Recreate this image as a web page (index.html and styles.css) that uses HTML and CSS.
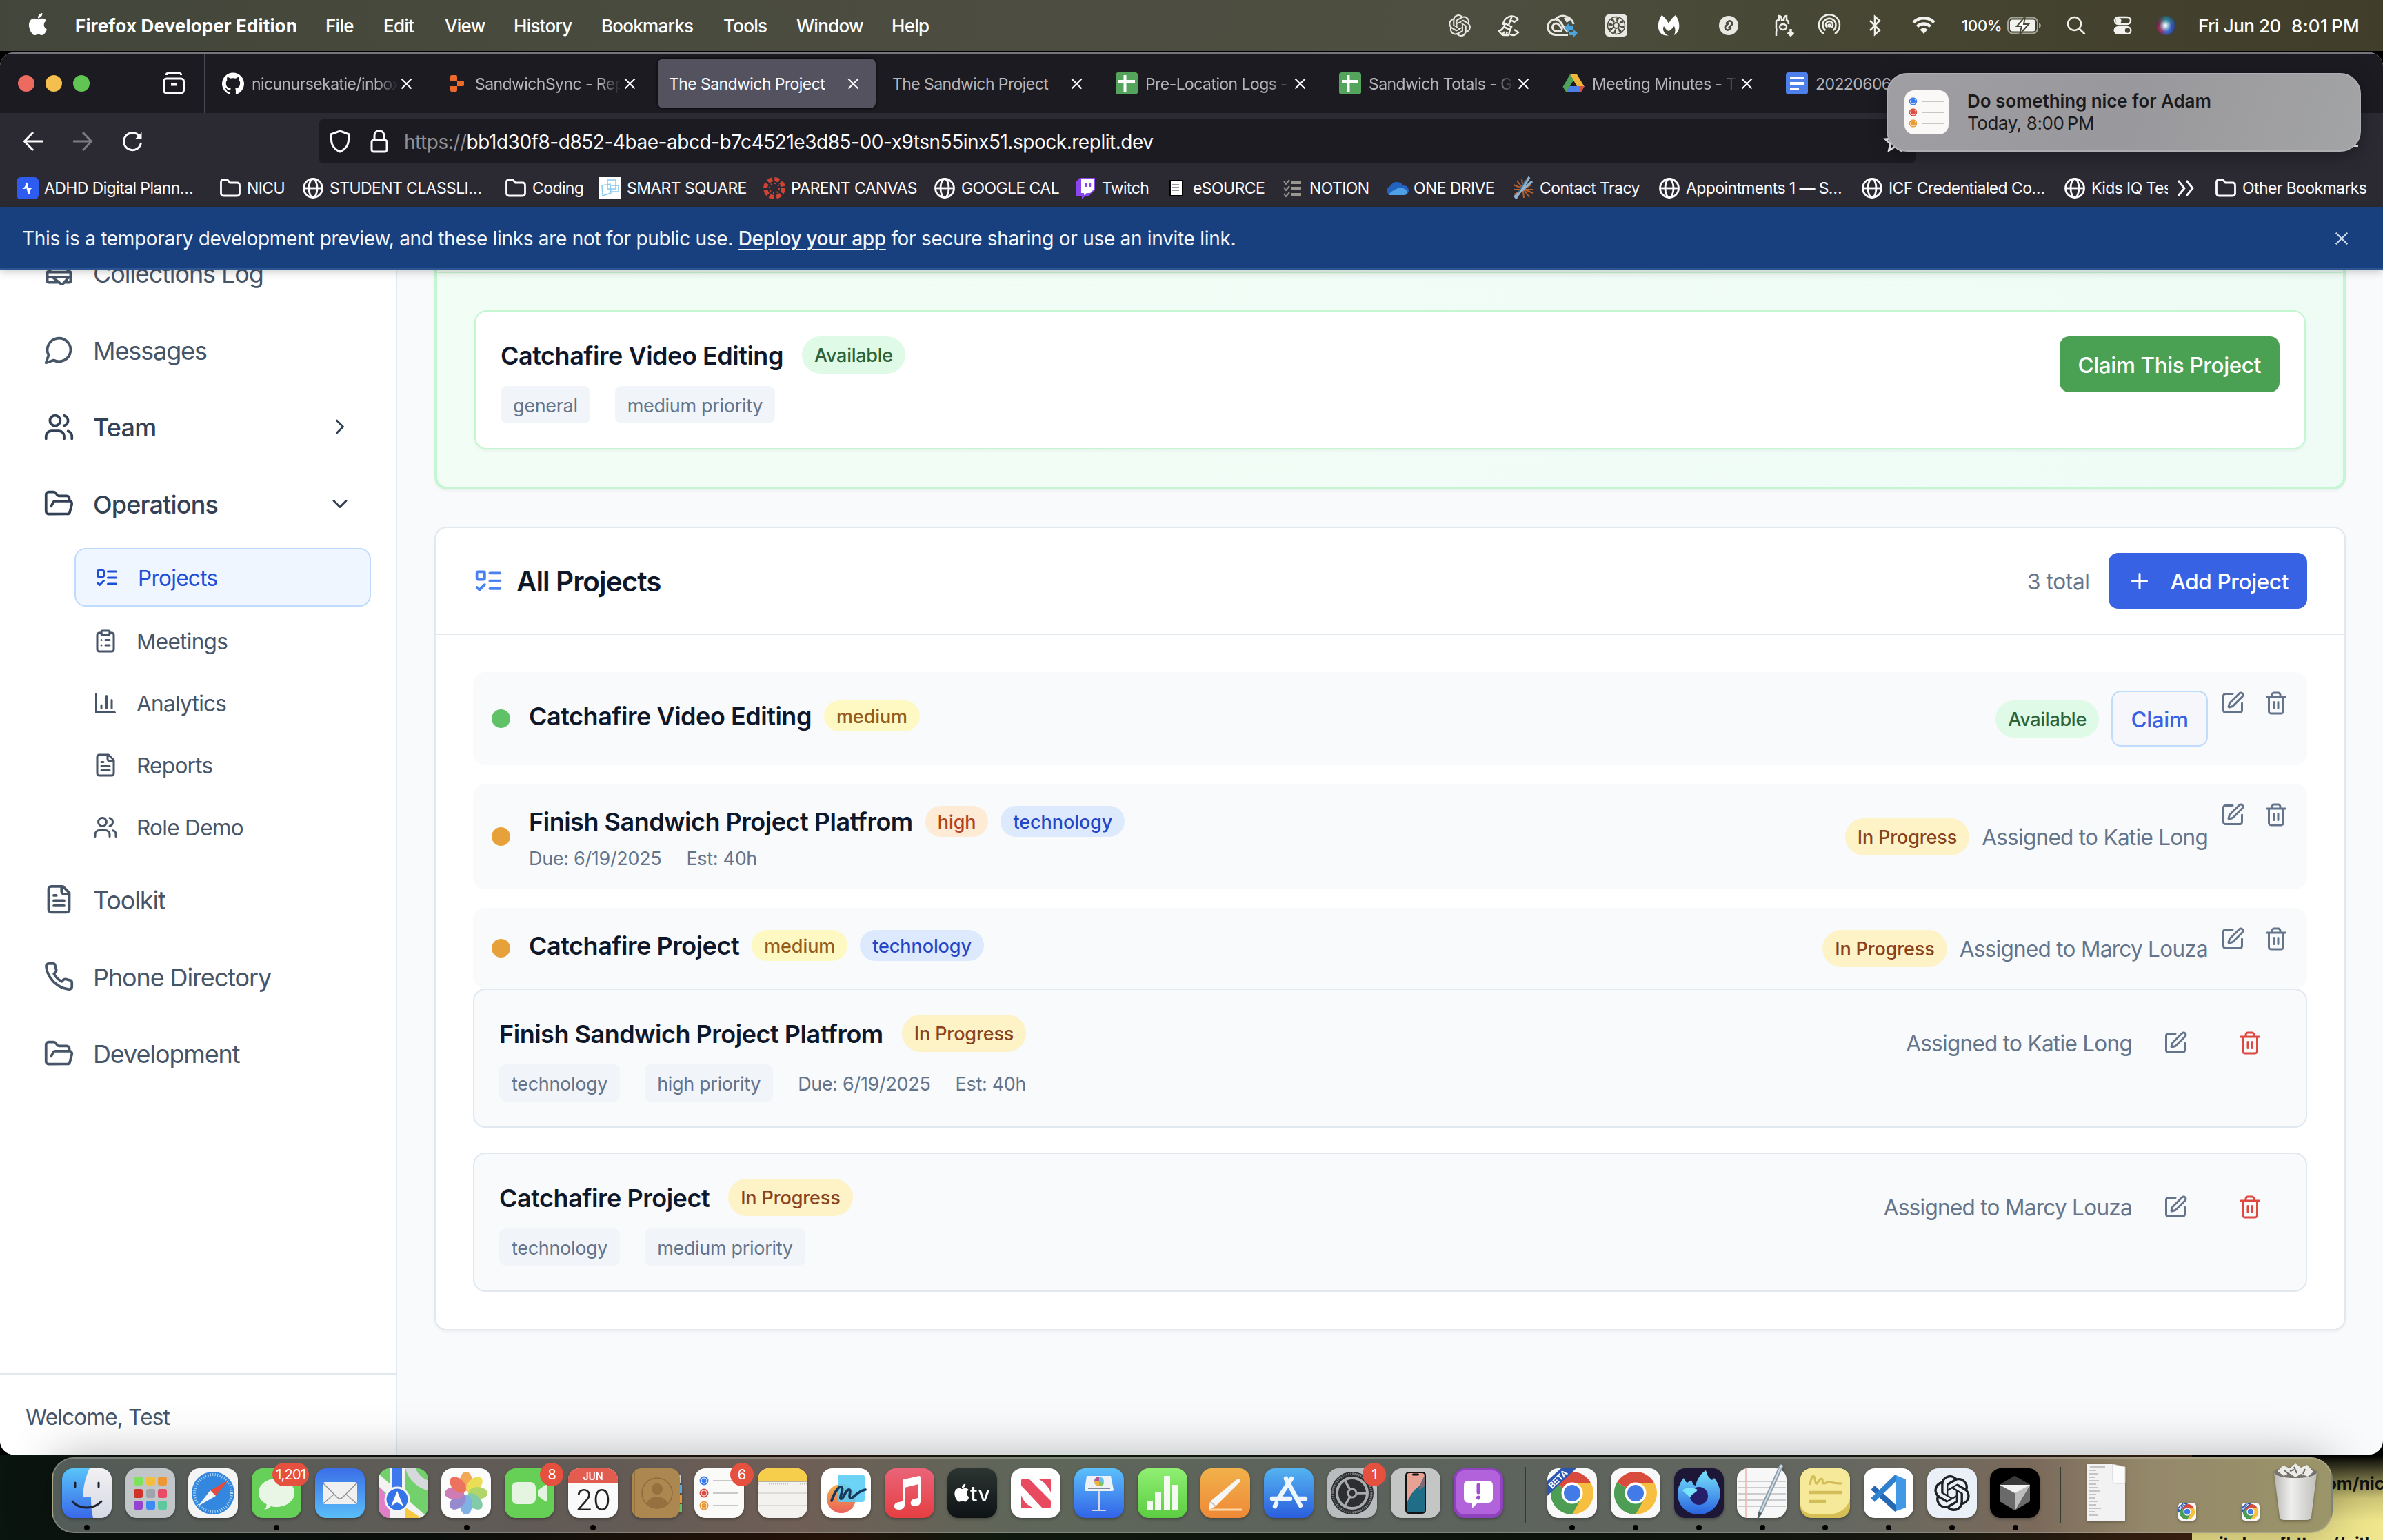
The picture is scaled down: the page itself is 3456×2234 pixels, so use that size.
FILE: index.html
```html
<!DOCTYPE html>
<html lang="en">
<head>
<meta charset="utf-8">
<title>The Sandwich Project</title>
<link rel="stylesheet" href="styles.css">
</head>
<body>
<svg class="sprite" aria-hidden="true">
  <symbol id="sandwich" viewBox="0 0 24 24"><path d="M3 11v3a1 1 0 0 0 1 1h16a1 1 0 0 0 1-1v-3M12 19H4a1 1 0 0 1-1-1v-2a1 1 0 0 1 1-1h16a1 1 0 0 1 1 1v2a1 1 0 0 1-1 1h-3.83M3 11l7.77-6.04a2 2 0 0 1 2.46 0L21 11H3ZM12.97 19.77 7 15h12.5l-3.75 4.5a2 2 0 0 1-2.78.27Z"/></symbol>
  <symbol id="message" viewBox="0 0 24 24"><path d="M7.9 20A9 9 0 1 0 4 16.1L2 22Z"/></symbol>
  <symbol id="users" viewBox="0 0 24 24"><path d="M16 21v-2a4 4 0 0 0-4-4H6a4 4 0 0 0-4 4v2M22 21v-2a4 4 0 0 0-3-3.87M16 3.13a4 4 0 0 1 0 7.75"/><circle cx="9" cy="7" r="4"/></symbol>
  <symbol id="folder-open" viewBox="0 0 24 24"><path d="m6 14 1.5-2.9A2 2 0 0 1 9.24 10H20a2 2 0 0 1 1.94 2.5l-1.54 6a2 2 0 0 1-1.95 1.5H4a2 2 0 0 1-2-2V5a2 2 0 0 1 2-2h3.9a2 2 0 0 1 1.69.9l.81 1.2a2 2 0 0 0 1.67.9H18a2 2 0 0 1 2 2v2"/></symbol>
  <symbol id="list-todo" viewBox="0 0 24 24"><rect x="3" y="5" width="6" height="6" rx="1"/><path d="m3 17 2 2 4-4M13 6h8M13 12h8M13 18h8"/></symbol>
  <symbol id="clipboard" viewBox="0 0 24 24"><rect x="8" y="2" width="8" height="4" rx="1"/><path d="M16 4h2a2 2 0 0 1 2 2v14a2 2 0 0 1-2 2H6a2 2 0 0 1-2-2V6a2 2 0 0 1 2-2h2M12 11h4M12 16h4M8 11h.01M8 16h.01"/></symbol>
  <symbol id="chart" viewBox="0 0 24 24"><path d="M3 3v18h18M18 17V9M13 17V5M8 17v-3"/></symbol>
  <symbol id="file-text" viewBox="0 0 24 24"><path d="M15 2H6a2 2 0 0 0-2 2v16a2 2 0 0 0 2 2h12a2 2 0 0 0 2-2V7ZM14 2v4a2 2 0 0 0 2 2h4M10 9H8M16 13H8M16 17H8"/></symbol>
  <symbol id="phone" viewBox="0 0 24 24"><path d="M22 16.92v3a2 2 0 0 1-2.18 2 19.79 19.79 0 0 1-8.63-3.07 19.5 19.5 0 0 1-6-6 19.79 19.79 0 0 1-3.07-8.67A2 2 0 0 1 4.11 2h3a2 2 0 0 1 2 1.72 12.84 12.84 0 0 0 .7 2.81 2 2 0 0 1-.45 2.11L8.09 9.91a16 16 0 0 0 6 6l1.27-1.27a2 2 0 0 1 2.11-.45 12.84 12.84 0 0 0 2.81.7A2 2 0 0 1 22 16.92z"/></symbol>
  <symbol id="chev-right" viewBox="0 0 24 24"><path d="m9 18 6-6-6-6"/></symbol>
  <symbol id="chev-down" viewBox="0 0 24 24"><path d="m6 9 6 6 6-6"/></symbol>
  <symbol id="plus" viewBox="0 0 24 24"><path d="M5 12h14M12 5v14"/></symbol>
  <symbol id="pen" viewBox="0 0 24 24"><path d="M12 3H5a2 2 0 0 0-2 2v14a2 2 0 0 0 2 2h14a2 2 0 0 0 2-2v-7"/><path d="M18.375 2.625a1 1 0 0 1 3 3l-9.013 9.014a2 2 0 0 1-.853.505l-2.873.84a.5.5 0 0 1-.62-.62l.84-2.873a2 2 0 0 1 .506-.852z"/></symbol>
  <symbol id="trash" viewBox="0 0 24 24"><path d="M3 6h18M19 6v14c0 1-1 2-2 2H7c-1 0-2-1-2-2V6M8 6V4c0-1 1-2 2-2h4c1 0 2 1 2 2v2M10 11v6M14 11v6"/></symbol>
  <symbol id="x" viewBox="0 0 18 18"><path d="M1.500 1.500 16.500 16.500M16.500 1.500 1.500 16.500"/></symbol>
  <symbol id="globe" viewBox="0 0 32 32"><circle cx="16" cy="16" r="13.500"/><ellipse cx="16" cy="16" rx="6" ry="13.500"/><path d="M3 16h26"/></symbol>
  <symbol id="folder" viewBox="0 0 32 32"><path d="M2.500 7a3.500 3.500 0 0 1 3.500-3.500h5.500l4 4.500H26A3.500 3.500 0 0 1 29.500 11.500v12A3.500 3.500 0 0 1 26 27H6a3.500 3.500 0 0 1-3.500-3.500z"/></symbol>
  <symbol id="sheets" viewBox="0 0 32 32"><rect width="32" height="32" rx="4" fill="#55a45c"/><path d="M4 13h24M13.500 4v24" stroke="#fff" stroke-width="4"/></symbol>
  <symbol id="openai" viewBox="0 0 24 24"><path d="M22.2819 9.8211a5.9847 5.9847 0 0 0-.5157-4.9108 6.0462 6.0462 0 0 0-6.5098-2.9A6.0651 6.0651 0 0 0 4.9807 4.1818a5.9847 5.9847 0 0 0-3.9977 2.9 6.0462 6.0462 0 0 0 .7427 7.0966 5.98 5.98 0 0 0 .511 4.9107 6.051 6.051 0 0 0 6.5146 2.9001A5.9847 5.9847 0 0 0 13.2599 24a6.0557 6.0557 0 0 0 5.7718-4.2058 5.9894 5.9894 0 0 0 3.9977-2.9001 6.0557 6.0557 0 0 0-.7475-7.0729zm-9.022 12.6081a4.4755 4.4755 0 0 1-2.8764-1.0408l.1419-.0804 4.7783-2.7582a.7948.7948 0 0 0 .3927-.6813v-6.7369l2.02 1.1686a.071.071 0 0 1 .038.052v5.5826a4.504 4.504 0 0 1-4.4945 4.4944zm-9.6607-4.1254a4.4708 4.4708 0 0 1-.5346-3.0137l.142.0852 4.783 2.7582a.7712.7712 0 0 0 .7806 0l5.8428-3.3685v2.3324a.0804.0804 0 0 1-.0332.0615L9.74 19.9502a4.4992 4.4992 0 0 1-6.1408-1.6464zM2.3408 7.8956a4.485 4.485 0 0 1 2.3655-1.9728V11.6a.7664.7664 0 0 0 .3879.6765l5.8144 3.3543-2.0201 1.1685a.0757.0757 0 0 1-.071 0l-4.8303-2.7865A4.504 4.504 0 0 1 2.3408 7.872zm16.5963 3.8558L13.1038 8.364 15.1192 7.2a.0757.0757 0 0 1 .071 0l4.8303 2.7913a4.4944 4.4944 0 0 1-.6765 8.1042v-5.6772a.79.79 0 0 0-.407-.667zm2.0107-3.0231l-.142-.0852-4.7735-2.7818a.7759.7759 0 0 0-.7854 0L9.409 9.2297V6.8974a.0662.0662 0 0 1 .0284-.0615l4.8303-2.7866a4.4992 4.4992 0 0 1 6.6802 4.66zM8.3065 12.863l-2.02-1.1638a.0804.0804 0 0 1-.038-.0567V6.0742a4.4992 4.4992 0 0 1 7.3757-3.4537l-.142.0805L8.704 5.459a.7948.7948 0 0 0-.3927.6813zm1.0976-2.3654l2.602-1.4998 2.6069 1.4998v2.9994l-2.5974 1.4997-2.6067-1.4997Z"/></symbol>
  <symbol id="apple" viewBox="0 0 24 24"><path d="M12.152 6.896c-.948 0-2.415-1.078-3.96-1.04-2.04.027-3.91 1.183-4.961 3.014-2.117 3.675-.546 9.103 1.519 12.09 1.013 1.454 2.208 3.09 3.792 3.039 1.52-.065 2.09-.987 3.935-.987 1.831 0 2.35.987 3.96.948 1.637-.026 2.676-1.48 3.676-2.948 1.156-1.688 1.636-3.325 1.662-3.415-.039-.013-3.182-1.221-3.22-4.857-.026-3.04 2.48-4.494 2.597-4.559-1.429-2.09-3.623-2.324-4.39-2.376-2-.156-3.675 1.09-4.61 1.09zM15.53 3.83c.843-1.012 1.4-2.427 1.245-3.83-1.207.052-2.662.805-3.532 1.818-.78.896-1.454 2.338-1.273 3.714 1.338.104 2.715-.688 3.559-1.701"/></symbol>
  <symbol id="chrome" viewBox="0 0 72 72"><path d="M36 36 9.150 20.500a31 31 0 0 1 53.700 0z" fill="#d94b3d"/><path d="M36 36 62.850 20.500A31 31 0 0 1 36 67z" fill="#f6bf3f"/><path d="M36 36v31A31 31 0 0 1 9.150 20.500z" fill="#4d9e54"/><path d="M36 21h26.900L49.500 44 36 67l13.400-23z" fill="#f6bf3f"/><path d="M9.150 20.500 22.500 44 36 51 49 44 36 67A31 31 0 0 1 9.150 20.500z" fill="#4d9e54"/><circle cx="36" cy="36" r="15.500" fill="#fff"/><circle cx="36" cy="36" r="12" fill="#427be8"/></symbol>
  <symbol id="chrome-beta" viewBox="0 0 72 72"><clipPath id="cb"><rect width="72" height="72" rx="16"/></clipPath><use href="#chrome"/><g clip-path="url(#cb)"><path d="M0 40V18L20 0h22z" fill="#2d56b0"/><text x="16" y="20" text-anchor="middle" transform="rotate(-44 16 16)" font-family="Inter" font-size="12.500" font-weight="700" fill="#fff">BETA</text></g></symbol>
</svg>

<header class="menubar">
  <svg class="apple"><use href="#apple"/></svg>
  <b>Firefox Developer Edition</b><span>File</span><span>Edit</span><span>View</span><span>History</span><span>Bookmarks</span><span>Tools</span><span>Window</span><span>Help</span>
  <svg class="tray" viewBox="0 0 24 24" fill="#e9e9e4"><use href="#openai"/></svg>
  <svg class="tray line" viewBox="0 0 32 32"><path d="M29 7A12.500 12.500 0 0 0 7 15M20 2l-5 13M29 7l-6 4a7 7 0 0 0-4-2M10 13l9 5-2 4-9-4zM8 18c-2 3-4 5-7 6 2 3 5 6 7 6h7l2-8M6 29l3-4M11 30l2-5M17 29c4 2 9 1 12-3l-6-4"/></svg>
  <svg class="tray wide" viewBox="0 0 46 32"><g fill="none" stroke="#e9e9e4" stroke-width="3"><path d="M30 29.500H12A11 11 0 0 1 12 7c9 0 11 15 18 18"/><path d="M12 7c4-5 10-6 15-4a14 14 0 0 1 11 11"/><path d="M22 24H13a5 5 0 0 1 0-11c4 0 6 5 9 9"/></g><path d="M24 5l6-1 4 4-6 4z" fill="#e9e9e4"/><path d="M24 19l7-6v4h6v5h-6v4zM44 27l-7-6v4h-6v5h6v4z" fill="#4ba4dc"/></svg>
  <svg class="tray" viewBox="0 0 32 32"><rect width="32" height="32" rx="5" fill="#e9e9e4"/><circle cx="16" cy="16" r="12.500" fill="none" stroke="#4b4c3d" stroke-width="1.500"/><circle cx="16" cy="16" r="8.500" fill="none" stroke="#4b4c3d" stroke-width="6" stroke-dasharray="3 3.670"/><circle cx="16" cy="16" r="4" fill="none" stroke="#4b4c3d" stroke-width="2"/></svg>
  <svg class="tray" viewBox="0 0 32 32"><path d="M6 1c3 2 7 6 10 12C19 7 23 3 26 1c6 8 9 23-2 29 2-5 2-9 0-13-2 2-5 6-8 7-3-1-5-4-7-7-3 5 1 12 7 13.500C-2 32-2 12 6 1z" fill="#fff"/></svg>
  <svg class="tray" viewBox="0 0 32 32"><circle cx="16" cy="16" r="14" fill="#e9e9e4"/><path d="M20 18.500 17 21.500c-4 3-8-2-5-5l4-4M12 13.500l3-3c4-3 8 2 5 5l-4 4" fill="none" stroke="#4b4c3d" stroke-width="2.600"/></svg>
  <svg class="tray line" viewBox="0 0 32 32"><path d="M3 31v-6c2-3-1-5 0-8V10c1-2 2-2 4-2V2c3 0 4 3 4 6h3c0-3 1-6 4-6v6c3 1 3 4 3 6"/><ellipse cx="13" cy="18" rx="5" ry="4"/><path d="M24 21v8M20 26l4 4 4-4" stroke-width="3.500"/></svg>
  <svg class="tray line" viewBox="0 0 32 32"><path d="M8 28a15 15 0 1 1 16 0M10.500 23a9.500 9.500 0 1 1 11 0M13 19a5 5 0 1 1 6 0"/><circle cx="16" cy="16" r="1.500"/></svg>
  <svg class="tray line" viewBox="0 0 32 32"><path d="m5 9 14 14-7 6V3l7 6L5 23"/></svg>
  <svg class="tray wide" viewBox="0 0 36 32"><g fill="none" stroke="#f2f2ee" stroke-width="4.500"><path d="M3 11.500a21 21 0 0 1 30 0M8.500 17.500a13.500 13.500 0 0 1 19 0"/></g><path d="M12.500 22a8 8 0 0 1 11 0L18 28z" fill="#f2f2ee"/></svg>
  <span class="pct">100%</span>
  <svg class="tray wide" viewBox="0 0 50 32"><rect x="1" y="4.500" width="43" height="23" rx="7" fill="none" stroke="#a5a597" stroke-width="2"/><rect x="4" y="7.500" width="37" height="17" rx="4" fill="#f2f2ee"/><path d="M46 12v8q3-1.500 3-4t-3-4z" fill="#a5a597"/><path d="m26 3-12 14h7l-3 12 13-15h-7z" fill="#fff" stroke="#4a4a37" stroke-width="2"/></svg>
  <svg class="tray line" viewBox="0 0 32 32"><circle cx="13.500" cy="13.500" r="9.500"/><path d="m20.500 20.500 8 8"/></svg>
  <svg class="tray" viewBox="0 0 32 32"><rect x="3" y="4" width="23" height="10" rx="5" fill="none" stroke="#f2f2ee" stroke-width="2.500"/><circle cx="8.500" cy="9" r="4" fill="#f2f2ee"/><rect x="1.500" y="17" width="26" height="12" rx="6" fill="#f2f2ee"/><circle cx="21.500" cy="23" r="3.700" fill="#4a4a37"/></svg>
  <i class="siri"></i>
  <span class="clock">Fri Jun 20</span><span class="clock wide-ls">8:01&#8201;PM</span>
</header>

<main class="window">
  <div class="tabbar">
    <div class="lights"><i class="red"></i><i class="yellow"></i><i class="green"></i>
      <svg width="32" height="32" viewBox="0 0 32 32" fill="none" stroke="#fbfbfe" stroke-width="3"><path d="M5.500 4V3a1.500 1.500 0 0 1 1.500-1.500h18A1.500 1.500 0 0 1 26.500 3v1"/><rect x="1.500" y="9" width="29" height="21" rx="4"/><path d="M12 17.500h8" stroke-width="4"/></svg>
    </div>
    <div class="tab"><svg class="fav" viewBox="0 0 24 24" fill="#fff"><path d="M12 .297c-6.630 0-12 5.373-12 12 0 5.303 3.438 9.800 8.205 11.385.6.113.82-.258.82-.577 0-.285-.01-1.040-.015-2.040-3.338.724-4.042-1.610-4.042-1.610C4.422 18.070 3.633 17.700 3.633 17.700c-1.087-.744.084-.729.084-.729 1.205.084 1.838 1.236 1.838 1.236 1.070 1.835 2.809 1.305 3.495.998.108-.776.417-1.305.76-1.605-2.665-.3-5.466-1.332-5.466-5.930 0-1.310.465-2.380 1.235-3.220-.135-.303-.54-1.523.105-3.176 0 0 1.005-.322 3.300 1.230.96-.267 1.980-.399 3-.405 1.020.006 2.040.138 3 .405 2.280-1.552 3.285-1.230 3.285-1.230.645 1.653.24 2.873.12 3.176.765.84 1.230 1.910 1.230 3.220 0 4.610-2.805 5.625-5.475 5.920.42.36.81 1.096.81 2.220 0 1.606-.015 2.896-.015 3.286 0 .315.21.69.825.57C20.565 22.092 24 17.592 24 12.297c0-6.627-5.373-12-12-12"/></svg><span class="fade">nicunursekatie/inbox</span><svg class="x"><use href="#x"/></svg></div>
    <div class="tab"><svg class="fav" viewBox="0 0 32 32" fill="#ec6a2a"><path d="M7 6a2 2 0 0 1 2-2h6a2 2 0 0 1 2 2v6H7zM17 12h8a2 2 0 0 1 2 2v4a2 2 0 0 1-2 2h-8zM7 20h10v6a2 2 0 0 1-2 2H9a2 2 0 0 1-2-2z"/></svg><span class="fade">SandwichSync - Repl</span><svg class="x"><use href="#x"/></svg></div>
    <div class="tab active"><span>The Sandwich Project</span><svg class="x"><use href="#x"/></svg></div>
    <div class="tab"><span>The Sandwich Project</span><svg class="x"><use href="#x"/></svg></div>
    <div class="tab"><svg class="fav"><use href="#sheets"/></svg><span class="fade">Pre-Location Logs - G</span><svg class="x"><use href="#x"/></svg></div>
    <div class="tab"><svg class="fav"><use href="#sheets"/></svg><span class="fade">Sandwich Totals - Go</span><svg class="x"><use href="#x"/></svg></div>
    <div class="tab"><svg class="fav" viewBox="0 0 32 32"><path d="M11 3h10l11 18H21.500z" fill="#f2b53c"/><path d="M11 3 .5 21 5.500 29 16 11.500z" fill="#4da35a"/><path d="M5.500 29h21L32 20H10.500z" fill="#4a80e8"/><path d="m26.500 29 5.500-9h-8z" fill="#dc4f3f"/></svg><span class="fade">Meeting Minutes - Th</span><svg class="x"><use href="#x"/></svg></div>
    <div class="tab"><svg class="fav" viewBox="0 0 32 32"><rect width="32" height="32" rx="4" fill="#4e80ec"/><path d="M6 8h20M6 16h20M6 24h13" stroke="#fff" stroke-width="4"/></svg><span>20220606</span></div>
  </div>

  <div class="navbar">
    <svg viewBox="0 0 30 30"><path d="M15 2 2.500 15 15 28M3 15h26"/></svg>
    <svg class="dim" viewBox="0 0 30 30"><path d="m15 2 12.500 13L15 28M1 15h26"/></svg>
    <svg viewBox="0 0 30 30"><path d="M26 9A12.500 12.500 0 1 0 27.500 17"/><path d="M28.500 2v9.500H19z" fill="#fbfbfe" stroke="none"/></svg>
    <div class="url">
      <svg viewBox="0 0 30 34"><path d="M15 2 27.500 6.500v8c0 8-5 14.500-12.500 17.500C7.500 29 2.500 22.500 2.500 14.500v-8z"/></svg>
      <svg class="lock" viewBox="0 0 26 34"><rect x="2" y="15" width="22" height="17" rx="3"/><path d="M6 15V8.500a7 7 0 0 1 14 0V15"/></svg>
      <p><span>https://</span>bb1d30f8-d852-4bae-abcd-b7c4521e3d85-00-x9tsn55inx51.spock.replit.dev</p>
      <svg class="star" viewBox="0 0 32 32"><path d="m16 3 4 9 9.500 1-7 6.500 2 9.500-8.500-5-8.500 5 2-9.500-7-6.500 9.500-1z"/></svg>
    </div>
    <i class="burger"></i>
  </div>

  <div class="bookmarks">
    <div><svg viewBox="0 0 32 32"><rect width="32" height="32" rx="6" fill="#2f5cf0"/><path d="M14 8c-1 5-3 8-6 9 4 0 7 0 9-3zM18 24c1-5 3-8 6-9-4 0-7 0-9 3z" fill="#fff"/><path d="M14 8l4 16" stroke="#fff" stroke-width="3"/></svg>ADHD Digital Plann…</div>
    <div><svg class="ln"><use href="#folder"/></svg>NICU</div>
    <div><svg class="ln"><use href="#globe"/></svg>STUDENT CLASSLI…</div>
    <div><svg class="ln"><use href="#folder"/></svg>Coding</div>
    <div><svg viewBox="0 0 32 32"><rect width="32" height="32" fill="#fff"/><g fill="none" stroke="#8cc9ec" stroke-width="1.500"><path d="M12 4h12v13H12zM4 12l12-2 1 13-12 4zM16 12h12v9H16z"/></g></svg>SMART SQUARE</div>
    <div><svg viewBox="0 0 32 32"><circle cx="16" cy="16" r="13" fill="none" stroke="#cf4434" stroke-width="6" stroke-dasharray="7 3.200"/><circle cx="16" cy="16" r="7" fill="none" stroke="#cf4434" stroke-width="2" stroke-dasharray="2 3.500"/></svg>PARENT CANVAS</div>
    <div><svg class="ln"><use href="#globe"/></svg>GOOGLE CAL</div>
    <div><svg viewBox="0 0 32 32"><path d="M8 1h22v18l-9 8h-5l-5 5v-5H2V7z" fill="#8b45f0"/><path d="M10 3h18v15l-5 5h-5l-4 3v-3h-4z" fill="#fff"/><path d="M17 8v6M23 8v6" stroke="#8b45f0" stroke-width="2.500"/></svg>Twitch</div>
    <div><svg viewBox="0 0 32 32"><rect x="6" y="4" width="20" height="24" fill="#000"/><rect x="8" y="6" width="16" height="20" fill="#fff"/><path d="M10 11h10M10 15h10M10 19h10" stroke="#999" stroke-width="2"/></svg>eSOURCE</div>
    <div><svg viewBox="0 0 32 32" fill="none" stroke="#97968f"><path d="M14 8h14M14 16h14M14 25h14" stroke-width="4"/><path d="m3 6 3 4 5-6M3 15l3 4 5-6M3 24l3 4 5-6" stroke-width="2"/></svg>NOTION</div>
    <div><svg viewBox="0 0 32 32"><path d="M6 26A7 7 0 0 1 6 13a11 11 0 0 1 19-1 7 7 0 0 1 2 14z" fill="#2263c0"/><path d="M5 26c-2-3 9-9 15-11 5 0 12 4 11 8-1 2-3 3-5 3z" fill="#4fa0e4"/></svg>ONE DRIVE</div>
    <div><svg viewBox="0 0 32 32" fill="none"><path d="M2 11l28 12M3 25l25-14M14 2l3 28M7 5l18 24M2 18h28" stroke="#b8612f" stroke-width="2"/><path d="M25 0 5 31M29 6 3 29" stroke="#8fb3cc" stroke-width="3.500"/><path d="M20 4 9 22" stroke="#3b6b8f" stroke-width="2"/></svg>Contact Tracy</div>
    <div><svg class="ln"><use href="#globe"/></svg>Appointments 1 — S…</div>
    <div><svg class="ln"><use href="#globe"/></svg>ICF Credentialed Co…</div>
    <div class="cut"><svg class="ln"><use href="#globe"/></svg>Kids IQ Test</div>
    <div><svg class="ln" viewBox="0 0 32 32"><path d="m3 5 9 11-9 11M15 5l9 11-9 11"/></svg></div>
    <div><svg class="ln"><use href="#folder"/></svg>Other Bookmarks</div>
  </div>

  <div class="banner"><p>This is a temporary development preview, and these links are not for public use. <a>Deploy your app</a> for secure sharing or use an invite link.</p><svg><use href="#x"/></svg></div>

  <div class="app">
    <aside class="sidebar">
      <nav>
        <a class="item"><svg><use href="#sandwich"/></svg><span>Collections Log</span></a>
        <a class="item"><svg><use href="#message"/></svg><span>Messages</span></a>
        <a class="item group"><svg><use href="#users"/></svg><span>Team</span><svg class="chev"><use href="#chev-right"/></svg></a>
        <a class="item group"><svg><use href="#folder-open"/></svg><span>Operations</span><svg class="chev"><use href="#chev-down"/></svg></a>
        <div class="sub">
          <a class="on"><svg><use href="#list-todo"/></svg><span>Projects</span></a>
          <a><svg><use href="#clipboard"/></svg><span>Meetings</span></a>
          <a><svg><use href="#chart"/></svg><span>Analytics</span></a>
          <a><svg><use href="#file-text"/></svg><span>Reports</span></a>
          <a><svg><use href="#users"/></svg><span>Role Demo</span></a>
        </div>
        <a class="item"><svg><use href="#file-text"/></svg><span>Toolkit</span></a>
        <a class="item"><svg><use href="#phone"/></svg><span>Phone Directory</span></a>
        <a class="item"><svg><use href="#folder-open"/></svg><span>Development</span></a>
      </nav>
      <div class="welcome">Welcome, Test</div>
    </aside>

    <section class="content">
      <div class="card available">
        <div class="head"></div>
        <div class="body">
          <article class="box">
            <div>
              <div class="line"><h3>Catchafire Video Editing</h3><span class="pill ok">Available</span></div>
              <div class="tags"><span>general</span><span>medium priority</span></div>
            </div>
            <button class="btn green">Claim This Project</button>
          </article>
        </div>
      </div>

      <div class="card">
        <div class="head">
          <svg class="todo"><use href="#list-todo"/></svg><h2>All Projects</h2>
          <span class="total">3 total</span>
          <button class="btn blue"><svg><use href="#plus"/></svg>Add Project</button>
        </div>
        <div class="body">
          <div class="rows">
            <article class="row">
              <i class="dot g"></i>
              <div class="info"><div class="line"><h3>Catchafire Video Editing</h3><span class="chip med">medium</span></div><div class="meta"></div></div>
              <span class="pill ok">Available</span><button class="btn outline">Claim</button>
              <svg class="act"><use href="#pen"/></svg><svg class="act last"><use href="#trash"/></svg>
            </article>
            <article class="row">
              <i class="dot"></i>
              <div class="info"><div class="line"><h3>Finish Sandwich Project Platfrom</h3><span class="chip high">high</span><span class="chip tech">technology</span></div><div class="meta"><span>Due: 6/19/2025</span><span>Est: 40h</span></div></div>
              <span class="pill prog">In Progress</span><span class="who">Assigned to Katie Long</span>
              <svg class="act"><use href="#pen"/></svg><svg class="act last"><use href="#trash"/></svg>
            </article>
            <article class="row">
              <i class="dot"></i>
              <div class="info"><div class="line"><h3>Catchafire Project</h3><span class="chip med">medium</span><span class="chip tech">technology</span></div><div class="meta"></div></div>
              <span class="pill prog">In Progress</span><span class="who">Assigned to Marcy Louza</span>
              <svg class="act"><use href="#pen"/></svg><svg class="act last"><use href="#trash"/></svg>
            </article>
          </div>
          <div class="boxes">
            <article class="box">
              <div>
                <div class="line"><h3>Finish Sandwich Project Platfrom</h3><span class="pill prog">In Progress</span></div>
                <div class="tags"><span>technology</span><span>high priority</span><em>Due: 6/19/2025</em><em>Est: 40h</em></div>
              </div>
              <div class="tools"><span class="who">Assigned to Katie Long</span><svg><use href="#pen"/></svg><svg class="danger"><use href="#trash"/></svg></div>
            </article>
            <article class="box">
              <div>
                <div class="line"><h3>Catchafire Project</h3><span class="pill prog">In Progress</span></div>
                <div class="tags"><span>technology</span><span>medium priority</span></div>
              </div>
              <div class="tools"><span class="who">Assigned to Marcy Louza</span><svg><use href="#pen"/></svg><svg class="danger"><use href="#trash"/></svg></div>
            </article>
          </div>
        </div>
      </div>
    </section>
  </div>
</main>

<div class="sticky"><p class="l1">https://github.com/nicu</p><p class="l2">git clone [https://github</p></div>

<footer class="dock">
  <div class="cell run"><svg viewBox="0 0 72 72"><defs><linearGradient id="fb" x2="0" y2="1"><stop stop-color="#58c4f8"/><stop offset="1" stop-color="#3a68ea"/></linearGradient><linearGradient id="fw" x2="0" y2="1"><stop stop-color="#f2f1f3"/><stop offset="1" stop-color="#d5d9e4"/></linearGradient></defs><rect width="72" height="72" rx="16" fill="url(#fb)"/><path d="M40 0h16a16 16 0 0 1 16 16v40a16 16 0 0 1-16 16H45c-2-9-3-18-3-30H30C31 26 34 12 40 0z" fill="url(#fw)"/><path d="M19 21v6M53 21v6M15 48c10 12 31 12 42 0" fill="none" stroke="#1c2330" stroke-width="3" stroke-linecap="round"/></svg></div>
  <div class="cell"><svg viewBox="0 0 72 72"><rect width="72" height="72" rx="16" fill="#c3c6c9"/><g><rect x="12" y="12" width="13" height="13" rx="3" fill="#7ee35c"/><rect x="30" y="12" width="13" height="13" rx="3" fill="#f3be3f"/><rect x="47" y="12" width="13" height="13" rx="3" fill="#ee9835"/><rect x="12" y="30" width="13" height="13" rx="3" fill="#cf3329"/><rect x="30" y="30" width="13" height="13" rx="3" fill="#9fa5aa"/><rect x="47" y="30" width="13" height="13" rx="3" fill="#ea4a63"/><rect x="12" y="47" width="13" height="13" rx="3" fill="#9343d0"/><rect x="30" y="47" width="13" height="13" rx="3" fill="#3d8cf5"/><rect x="47" y="47" width="13" height="13" rx="3" fill="#5cc99e"/></g></svg></div>
  <div class="cell"><svg viewBox="0 0 72 72"><rect width="72" height="72" rx="16" fill="#f4f4f5"/><circle cx="36" cy="36" r="31" fill="#3487de"/><circle cx="36" cy="36" r="27" fill="none" stroke="#b9dcf8" stroke-width="4" stroke-dasharray="1 2.500"/><path d="M58 17 40 40l-8-8z" fill="#e54a3c"/><path d="M14 55 32 32l8 8z" fill="#f3f4f6"/></svg></div>
  <div class="cell run"><svg viewBox="0 0 72 72"><rect width="72" height="72" rx="16" fill="#67d058"/><path d="M36 15c15 0 26 9 26 20.500S51 56 36 56c-3 0-6-.3-8-1-3 3-6 4.500-10 4.500 3-2 4-4.500 3.500-7.500C14 48 10 42 10 35.500 10 24 21 15 36 15z" fill="#e9f6e6"/></svg><b class="badge">1,201</b></div>
  <div class="cell"><svg viewBox="0 0 72 72"><defs><linearGradient id="ma" x2="0" y2="1"><stop stop-color="#3b6fe8"/><stop offset="1" stop-color="#5abef8"/></linearGradient></defs><rect width="72" height="72" rx="16" fill="url(#ma)"/><rect x="11" y="20" width="50" height="32" rx="4" fill="#f0f0f0"/><path d="m12 22 20 20q4 4 8 0l20-20M12 51l16-14M60 51 44 37" fill="none" stroke="#909296" stroke-width="1.500"/></svg></div>
  <div class="cell"><svg viewBox="0 0 72 72"><clipPath id="mc"><rect width="72" height="72" rx="16"/></clipPath><g clip-path="url(#mc)"><rect width="72" height="72" fill="#72d16c"/><path d="M45-8a36 36 0 0 0 36 34" fill="none" stroke="#d6d9dc" stroke-width="14"/><path d="M0 24v52h36z" fill="#e07fc7"/><path d="M0 8l72 64H50L0 26z" fill="#f3f3f3"/><path d="M16 0h22v72H16z" fill="#f3f3f3"/><path d="M20 0h14v40H20z" fill="#3e78ee"/><path d="M38 72V56l24 16z" fill="#f7c943"/></g><circle cx="27" cy="45" r="17" fill="#3474e8" stroke="#f5f5f5" stroke-width="3"/><path d="m27 33 9 22-9-6-9 6z" fill="#fff"/></svg></div>
  <div class="cell run"><svg viewBox="0 0 72 72"><rect width="72" height="72" rx="16" fill="#fcfcfc"/><g opacity=".85"><ellipse cx="36" cy="19" rx="9" ry="14" fill="#f29a38"/><ellipse cx="36" cy="19" rx="9" ry="14" fill="#e9d93a" transform="rotate(45 36 36)"/><ellipse cx="36" cy="19" rx="9" ry="14" fill="#a5cf50" transform="rotate(90 36 36)"/><ellipse cx="36" cy="19" rx="9" ry="14" fill="#6cc39b" transform="rotate(135 36 36)"/><ellipse cx="36" cy="19" rx="9" ry="14" fill="#6aa5e0" transform="rotate(180 36 36)"/><ellipse cx="36" cy="19" rx="9" ry="14" fill="#8577c8" transform="rotate(225 36 36)"/><ellipse cx="36" cy="19" rx="9" ry="14" fill="#c568a8" transform="rotate(270 36 36)"/><ellipse cx="36" cy="19" rx="9" ry="14" fill="#ea5a45" transform="rotate(315 36 36)"/></g></svg></div>
  <div class="cell"><svg viewBox="0 0 72 72"><rect width="72" height="72" rx="16" fill="#65d055"/><rect x="10" y="20" width="35" height="32" rx="8" fill="#e4f4e0"/><path d="m48 32 11-8q3-1 3 2v20q0 3-3 2l-11-8z" fill="#e4f4e0"/></svg><b class="badge">8</b></div>
  <div class="cell run"><svg viewBox="0 0 72 72"><rect width="72" height="72" rx="16" fill="#fafafa"/><path d="M0 22v-6A16 16 0 0 1 16 0h40a16 16 0 0 1 16 16v6z" fill="#e35c50"/><text x="36" y="17" text-anchor="middle" font-size="14" font-weight="600" fill="#fff">JUN</text><text x="36" y="61" text-anchor="middle" font-size="42" font-weight="300" fill="#222">20</text></svg></div>
  <div class="cell"><svg viewBox="0 0 72 72"><path d="M66 10h6v12h-6z" fill="#c9ccce"/><path d="M66 24h7v12h-7z" fill="#5ba7dd"/><path d="M66 38h7v12h-7z" fill="#e79436"/><path d="M66 52h7v12h-7z" fill="#68bf63"/><rect width="70" height="72" rx="14" fill="#ad8750"/><path d="M4 4v64" stroke="#94713f" stroke-width="2"/><g fill="none" stroke="#8e6b3b" stroke-width="1.500"><circle cx="37" cy="36" r="22"/></g><circle cx="37" cy="30" r="8" fill="#94713f"/><path d="M21 51a17 15 0 0 1 32 0 22 22 0 0 1-32 0z" fill="#94713f"/></svg></div>
  <div class="cell"><svg viewBox="0 0 72 72"><rect width="72" height="72" rx="16" fill="#fafaf9"/><path d="M27 18h36M27 36h36M27 54h36" stroke="#b9b9b9" stroke-width="1.500"/><g fill="#fff" stroke-width="2"><circle cx="14" cy="18" r="5.500" stroke="#3a7af0"/><circle cx="14" cy="36" r="5.500" stroke="#dd4c42"/><circle cx="14" cy="54" r="5.500" stroke="#e99a36"/></g><circle cx="14" cy="18" r="3.500" fill="#3a7af0"/><circle cx="14" cy="36" r="3.500" fill="#dd4c42"/><circle cx="14" cy="54" r="3.500" fill="#e99a36"/></svg><b class="badge">6</b></div>
  <div class="cell"><svg viewBox="0 0 72 72"><rect width="72" height="72" rx="16" fill="#f3f2ef"/><path d="M0 18v-2A16 16 0 0 1 16 0h40a16 16 0 0 1 16 16v2z" fill="#f7ce4c"/><path d="M0 19h72" stroke="#b4b0a4" stroke-width="2"/><path d="M1 22.500h70" stroke="#c5c3be" stroke-width="2" stroke-dasharray="1 2"/><path d="M0 36h72M0 54h72" stroke="#dcdbd7" stroke-width="2"/></svg></div>
  <div class="cell"><svg viewBox="0 0 72 72"><defs><linearGradient id="fc" x2="0" y2="1"><stop stop-color="#f4b347"/><stop offset="1" stop-color="#ea605c"/></linearGradient></defs><rect width="72" height="72" rx="16" fill="#fff"/><circle cx="29" cy="44" r="21" fill="url(#fc)"/><rect x="24" y="9" width="39" height="40" rx="4" fill="#58cdf5" opacity=".88"/><path d="M15 47c6-16 12-23 15-19s-5 16-1 16 6-13 11-13-2 12 3 12 9-10 21-12" fill="none" stroke="#17395e" stroke-width="3.800" stroke-linecap="round"/></svg></div>
  <div class="cell"><svg viewBox="0 0 72 72"><defs><linearGradient id="mu" x2="0" y2="1"><stop stop-color="#ea6478"/><stop offset="1" stop-color="#e63e42"/></linearGradient></defs><rect width="72" height="72" rx="16" fill="url(#mu)"/><path d="M26 18q0-2 2-2l22-5q2 0 2 2v35c0 5-4 7-8 7-5 0-7-3-6-6 1-5 6-5 11-6V23l-20 5v25c0 5-4 7-8 7-5 0-8-3-7-6 1-5 7-5 12-6z" fill="#fff"/></svg></div>
  <div class="cell"><svg viewBox="0 0 72 72"><defs><linearGradient id="tv" x2="0" y2="1"><stop stop-color="#2c3532"/><stop offset="1" stop-color="#0e1215"/></linearGradient></defs><rect width="72" height="72" rx="16" fill="url(#tv)"/><svg x="8" y="22" width="26" height="27" fill="#fff"><use href="#apple"/></svg><text x="33" y="48" font-size="31" font-weight="500" fill="#fff">tv</text></svg></div>
  <div class="cell"><svg viewBox="0 0 72 72"><rect width="72" height="72" rx="16" fill="#fff"/><rect x="15" y="15" width="43" height="43" rx="3" fill="#e84a5f"/><path d="M24 13h14c10 3 18 11 21 22v13zM14 24v14c4 10 11 18 21 21h12z" fill="#fff"/><path d="M39 15h16q3 0 3 3v17C54 26 48 19 39 15zM15 39c3 9 9 15 19 19H18q-3 0-3-3z" fill="#e84a5f"/></svg></div>
  <div class="cell"><svg viewBox="0 0 72 72"><defs><linearGradient id="ke" x2="0" y2="1"><stop stop-color="#5cc0fa"/><stop offset="1" stop-color="#3263e8"/></linearGradient></defs><rect width="72" height="72" rx="16" fill="url(#ke)"/><path d="M18 11h35l4 20q0 2-2 2H17q-2 0-2-2z" fill="#eef1f5"/><path d="M20 29h32" stroke="#7c8a9c" stroke-width="2"/><circle cx="36" cy="19" r="7" fill="#69c1ea"/><path d="M36 19v-7a7 7 0 0 0-7 7z" fill="#b85292"/><path d="M36 19h-7a7 7 0 0 0 7 7z" fill="#eeb23d"/><path d="M36 19v7a7 7 0 0 0 7-4z" fill="#82c45e"/><path d="M36 33v27" stroke="#d6dae0" stroke-width="4"/><path d="M26 62q0-2 3-2h14q3 0 3 2z" fill="#d6dae0"/></svg></div>
  <div class="cell"><svg viewBox="0 0 72 72"><defs><linearGradient id="nu" x2="0" y2="1"><stop stop-color="#8fef72"/><stop offset="1" stop-color="#5ccd42"/></linearGradient></defs><rect width="72" height="72" rx="16" fill="url(#nu)"/><g fill="#f4faf2"><rect x="13" y="47" width="9" height="14" rx="1"/><rect x="25" y="34" width="9" height="27" rx="1"/><rect x="38" y="11" width="9" height="50" rx="1"/><rect x="50" y="24" width="9" height="37" rx="1"/></g></svg></div>
  <div class="cell"><svg viewBox="0 0 72 72"><defs><linearGradient id="pa" x2="0" y2="1"><stop stop-color="#f2b14a"/><stop offset="1" stop-color="#ee8937"/></linearGradient></defs><rect width="72" height="72" rx="16" fill="url(#pa)"/><path d="M12 60h48" stroke="#fbd9a8" stroke-width="3"/><path d="m12 60 2-12 39-32c3-2 6 1 4 4L22 55z" fill="#f6f6f4"/><path d="m14 48 8 7" stroke="#b9b5ad" stroke-width="1.500"/></svg></div>
  <div class="cell"><svg viewBox="0 0 72 72"><defs><linearGradient id="as" x2="0" y2="1"><stop stop-color="#54b3f0"/><stop offset="1" stop-color="#2b5ede"/></linearGradient></defs><rect width="72" height="72" rx="16" fill="url(#as)"/><path d="M32 15 53 54M40 15 21 44M18 51l-2 4M12 44h26M48 44h12" fill="none" stroke="#eef6fd" stroke-width="6.500" stroke-linecap="round"/></svg></div>
  <div class="cell"><svg viewBox="0 0 72 72"><rect width="72" height="72" rx="16" fill="#b9bcbf"/><circle cx="36" cy="36" r="31" fill="#2d2e31"/><circle cx="36" cy="36" r="28" fill="none" stroke="#85878a" stroke-width="3" stroke-dasharray="1.500 1.500"/><circle cx="36" cy="36" r="22" fill="none" stroke="#a9abad" stroke-width="4"/><circle cx="36" cy="36" r="6" fill="none" stroke="#a9abad" stroke-width="3"/><path d="M42 36h15M33 31 25 17M33 41l-8 14" stroke="#a9abad" stroke-width="3.500"/></svg><b class="badge">1</b></div>
  <div class="cell"><svg viewBox="0 0 72 72"><rect width="72" height="72" rx="16" fill="#c4c6c6"/><rect x="21" y="5" width="30" height="61" rx="5" fill="#111"/><rect x="23" y="7" width="26" height="57" rx="4" fill="#e8a294"/><path d="M49 22c-12 4-22 16-26 30v9q0 3 3 3h19q4 0 4-4z" fill="#1f6d87"/><path d="M49 10c-4 8-8 16-8 22l8-6z" fill="#7b6a78"/><rect x="31" y="7.500" width="10" height="3" rx="1.500" fill="#111"/></svg></div>
  <div class="cell"><svg viewBox="0 0 72 72"><rect width="72" height="72" rx="16" fill="#8f42bd"/><rect x="4" y="3" width="64" height="64" rx="12" fill="#b263dc"/><path d="M22 18h28q7 0 7 7v18q0 7-7 7H35l-8 8v-8h-5q-7 0-7-7V25q0-7 7-7z" fill="#fff"/><path d="M36 24v11" stroke="#a04fd0" stroke-width="5" stroke-linecap="round"/><circle cx="36" cy="42.500" r="3" fill="#a04fd0"/></svg></div>
  <i class="sep"></i>
  <div class="cell run"><svg viewBox="0 0 72 72"><rect width="72" height="72" rx="16" fill="#f8f8f8"/><use href="#chrome-beta"/></svg></div>
  <div class="cell run"><svg viewBox="0 0 72 72"><rect width="72" height="72" rx="16" fill="#f8f8f8"/><use href="#chrome"/></svg></div>
  <div class="cell run"><svg viewBox="0 0 72 72"><defs><linearGradient id="ff" x2="0" y2="1"><stop stop-color="#77e4fb"/><stop offset="1" stop-color="#2a62e0"/></linearGradient></defs><rect width="72" height="72" rx="16" fill="#1d1636"/><path d="M46 3c2 8 4 10 9 14l3-3c8 10 11 22 7 32-5 14-17 21-29 21C18 67 5 54 5 37c0-9 4-17 9-23 1 4 3 6 5 7 2-2 5-3 7-3 0 3 1 6 5 7 2-9 7-17 15-22z" fill="url(#ff)"/><circle cx="36" cy="40" r="13" fill="#251f6b"/><path d="M12 32c7-6 15-4 22-1-3 6-9 5-10 11-4-2-8-6-12-10z" fill="#7be3fb"/></svg></div>
  <div class="cell run"><svg viewBox="0 0 72 72"><rect width="72" height="72" rx="16" fill="#f7f7f7"/><path d="M1 19h70M1 28h70M1 37h70M1 46h70M1 55h70" stroke="#bdbfc2" stroke-width="1.500"/><path d="M13 0v72" stroke="#efb3ae" stroke-width="1.500"/><path d="M65-5 34 64" stroke="#8da0ae" stroke-width="6"/><path d="M65-5 34 64" stroke="#d5dde2" stroke-width="2"/><path d="m31 63 6 2-8 11z" fill="#55606a"/></svg></div>
  <div class="cell run"><svg viewBox="0 0 72 72"><rect width="72" height="72" rx="16" fill="#d6bf55"/><path d="M16 0h40a16 16 0 0 1 16 16v28c-3 12-12 20-24 22H16A16 16 0 0 1 0 52V16A16 16 0 0 1 16 0z" fill="#f6ea9a"/><path d="M14 24c2-12 4-14 6-12s1 12 4 10 4-8 7-7-1 8 4 7 4-4 9-2 8 2 16 2" fill="none" stroke="#d2bd58" stroke-width="3"/><path d="M12 35h48M12 48h25" stroke="#d2bd58" stroke-width="4.500"/></svg></div>
  <div class="cell run"><svg viewBox="0 0 72 72"><rect width="72" height="72" rx="16" fill="#fff"/><path d="M13 28 48 60" stroke="#2768b5" stroke-width="8"/><path d="M13 46 48 12" stroke="#2f80cf" stroke-width="8"/><path d="M47 10 61 16v41L47 62z" fill="#4199e6"/></svg></div>
  <div class="cell run"><svg viewBox="0 0 72 72"><rect width="72" height="72" rx="16" fill="#eaf0f8"/><svg x="10" y="10" width="52" height="52" fill="#1e2126"><use href="#openai"/></svg></svg></div>
  <div class="cell run"><svg viewBox="0 0 72 72"><rect width="72" height="72" rx="16" fill="#000"/><path d="m36 11 22 13v24L36 61 14 48V24z" fill="#6a6a6a"/><path d="m36 11 22 13H14z" fill="#3a3a3a"/><path d="M14 24h44L36 61V36z" fill="#f3f3f3"/><path d="m58 24-22 37V36z" fill="#bdbdbd"/></svg></div>
  <i class="sep narrow"></i>
  <div class="cell"><svg viewBox="0 0 72 72"><path d="M9-6h37l18 20v62H9z" fill="#f2f2f2"/><path d="M46-6v24q0 4 4 4h14V-2z" fill="#fbfbfb" stroke="#cfcfcf"/><path d="M13-2h22M12 3h10M12 8h12M12 13h9M12 18h14M12 23h10M12 28h12M12 33h16M12 38h10M12 43h8M12 48h13M12 53h10M12 58h17M12 63h9M12 68h12" stroke="#b5b5b5" stroke-width="1.500"/></svg></div>
  <div class="cell mini"><svg viewBox="0 0 72 72"><rect width="72" height="72" rx="14" fill="#f8f8f8"/><use href="#chrome-beta"/></svg></div>
  <div class="cell mini"><svg viewBox="0 0 72 72"><rect width="72" height="72" rx="14" fill="#f8f8f8"/><use href="#chrome-beta"/></svg></div>
  <div class="cell"><svg viewBox="0 0 72 72"><defs><linearGradient id="tr"><stop stop-color="#b9b8b5"/><stop offset=".4" stop-color="#efefee"/><stop offset="1" stop-color="#c0bfbb"/></linearGradient></defs><path d="M5 6h62l-8 64q-1 5-7 5H20q-6 0-7-5z" fill="url(#tr)"/><ellipse cx="36" cy="6" rx="31" ry="8" fill="#77736d"/><path d="m10 4 8-8 10 4 8-7 8 6 9-4 9 10-8 7-10-4-8 5-9-6-8 4z" fill="#ecebe8"/><path d="m20 3 6 5M34-2l4 9M50 1l-3 7M28 4l6-2" stroke="#6d6a66" stroke-width="2"/></svg></div>
</footer>

<div class="toast">
  <svg viewBox="0 0 64 64"><rect width="64" height="64" rx="14" fill="#faf9f8"/><path d="M25 16h33M25 32h33M25 48h33" stroke="#c9c8c7" stroke-width="2"/><g fill="#fff" stroke-width="1.500"><circle cx="12.500" cy="16" r="5" stroke="#3a7af0"/><circle cx="12.500" cy="32" r="5" stroke="#dd4c42"/><circle cx="12.500" cy="48" r="5" stroke="#e99a36"/></g><circle cx="12.500" cy="16" r="3.500" fill="#3a7af0"/><circle cx="12.500" cy="32" r="3.500" fill="#dd4c42"/><circle cx="12.500" cy="48" r="3.500" fill="#e99a36"/></svg>
  <p><b>Do something nice for Adam</b><span>Today, 8:00&#8201;PM</span></p>
</div>
</body>
</html>
```
FILE: styles.css
```css
* { box-sizing: border-box; margin: 0; padding: 0; }
body {
  width: 3456px; height: 2234px; overflow: hidden; position: relative;
  display: flex; flex-direction: column;
  font-family: Inter, "Liberation Sans", sans-serif;
  background: #000;
}
.sprite { position: absolute; width: 0; height: 0; }
svg { flex: none; overflow: visible; }
i, em { font-style: normal; }

/* menu bar */
.menubar {
  height: 76px; border-bottom: 2px solid #000; padding-left: 41px; flex: none;
  display: grid; align-items: center; white-space: nowrap;
  grid-template-columns: 68px 363px 84px 89px 100px 127px 177px 106px 138px 808px 72px 71px 84px 76px 87px 82px 64px 70px 65px 73px 66px 84px 69px 62px 62px 135px auto;
  background: linear-gradient(90deg, #43463a, #4c4d40 40%, #4e4f41 60%, #44432f 85%, #403e2a);
  color: #fff; font-size: 26px; font-weight: 500; letter-spacing: -.028em;
}
.menubar b { font-weight: 700; letter-spacing: .006em; }
.apple { width: 32px; height: 32px; fill: #fff; margin: -4px 0 0 -2px; }
.tray { width: 32px; height: 32px; }
.tray.wide { width: auto; height: 32px; justify-self: start; }
.tray.line { fill: none; stroke: #f0f0ea; stroke-width: 2.5; }
.pct { font-size: 22px; letter-spacing: -.01em; }
.siri { width: 28px; height: 28px; margin-left: 1px; border-radius: 50%; background: radial-gradient(circle at 48% 50%, #eef 6%, rgba(160,220,230,.6) 26%, transparent 45%), conic-gradient(#2f7f86, #3a4fae 30%, #3b6ccf 45%, #b0325e 65%, #7a2f50 80%, #2f7f86); box-shadow: inset 0 0 4px #222; }
.clock { letter-spacing: -.018em; }
.wide-ls { letter-spacing: .012em; }

/* browser window */
.window {
  height: 2034px; flex: none; border-radius: 20px; overflow: hidden;
  display: flex; flex-direction: column; background: #f8fafc;
}
.tabbar {
  height: 88px; flex: none; background: #1c1b22; border-top: 2px solid #77767c;
  display: flex; align-items: center; gap: 8px; color: #b5b4b9; overflow: hidden;
}
.lights { width: 298px; flex: none; height: 86px; display: flex; align-items: center; gap: 16px; padding: 0 28px 0 26px; border-right: 2px solid #4b4a52; }
.lights i { width: 24px; height: 24px; border-radius: 50%; }
.lights svg { margin-left: auto; }
.red { background: #ec6a5e; } .yellow { background: #f4bf4f; } .green { background: #61c554; }
.tab { width: 316px; height: 72px; flex: none; border-radius: 8px; display: flex; align-items: center; padding: 0 24px 0 16px; font-size: 23px; letter-spacing: -.025em; white-space: nowrap; }
.tab span { padding-top: 2px; }
.tab.active { background: #54525e; color: #fbfbfe; box-shadow: 0 0 4px #000; }
.tab .fav { width: 32px; height: 32px; margin-right: 11px; }
.tab .x { width: 17px; height: 17px; margin-left: auto; fill: none; stroke: #fbfbfe; stroke-width: 2.2; }
.fade { width: 212px; overflow: hidden; -webkit-mask-image: linear-gradient(90deg, #000 85%, transparent); mask-image: linear-gradient(90deg, #000 85%, transparent); }
.navbar { height: 80px; flex: none; background: #2b2a33; display: flex; align-items: center; padding: 1px 0 0 33px; }
.navbar svg { width: 30px; height: 30px; fill: none; stroke: #fbfbfe; stroke-width: 3; margin-right: 42px; }
.navbar svg.dim { stroke: #7c7b82; }
.url { width: 2316px; height: 64px; margin-left: 213px; border-radius: 8px; background: #1c1b22; display: flex; align-items: center; padding: 0 14px 0 16px; color: #fbfbfe; font-size: 28px; letter-spacing: -.0168em; }
.url svg { height: 34px; margin-right: 29px; }
.url svg.lock { width: 26px; margin-right: 23px; }
.url svg.star { width: 32px; height: 32px; margin: 0 0 0 auto; }
.url p { white-space: nowrap; padding-top: 2px; }
.url p span { color: #8f8e94; }
.burger { width: 28px; height: 3px; margin: 14px 36px 0 auto; background: #fbfbfe; }
.bookmarks {
  height: 57px; flex: none; background: #2b2a33; padding-left: 24px; color: #fbfbfe;
  display: grid; align-items: center; font-size: 23px; letter-spacing: -.026em; white-space: nowrap;
  grid-template-columns: 294px 120px 294px 137px 238px 247px 204px 132px 169px 151px 183px 212px 294px 294px 163px 56px auto;
}
.bookmarks div { display: flex; align-items: center; gap: 8px; }
.bookmarks .cut { overflow: hidden; width: 151px; }
.bookmarks svg { width: 32px; height: 32px; }
.bookmarks .ln { fill: none; stroke: #fbfbfe; stroke-width: 2.8; }

.banner {
  height: 90px; flex: none; background: #18407f; color: #f2f5fa; position: relative; z-index: 2;
  display: flex; align-items: center; justify-content: space-between; padding: 2px 50px 0 32px;
  font-size: 28px; letter-spacing: -.0106em; border-bottom: 2px solid #2a5590; box-shadow: 0 3px 12px rgba(0,0,0,.22);
}
.banner a { text-decoration: underline; text-underline-offset: 5px; text-decoration-thickness: 2px; font-weight: 500; letter-spacing: -.012em; }
.banner svg { width: 20px; height: 20px; fill: none; stroke: #cfdaea; stroke-width: 2; }

/* application */
.app { flex: 1; min-height: 0; display: flex; overflow: hidden; }
.sidebar { width: 576px; flex: none; background: #fff; border-right: 2px solid #e2e8f0; display: flex; flex-direction: column; justify-content: space-between; }
.sidebar svg { fill: none; stroke: currentColor; stroke-width: 2; stroke-linecap: round; stroke-linejoin: round; }
nav { display: flex; flex-direction: column; gap: 3.6px; margin-top: -49px; padding: 0 36px 0 35px; }
nav span { padding-top: 2px; }
.item { height: 108px; display: flex; align-items: center; gap: 27px; padding: 0 27px 0 28px; color: #475569; font-size: 36px; letter-spacing: -.031em; }
.item svg { width: 45px; height: 45px; }
.item.group { color: #334155; font-weight: 500; letter-spacing: -.023em; }
.item svg.chev { width: 36px; height: 36px; margin-left: auto; }
.sub { display: flex; flex-direction: column; gap: 9px; margin: 7px 0 7px 73px; }
.sub a { height: 81px; display: flex; align-items: center; gap: 27px; padding-left: 27px; border-radius: 16px; color: #475569; font-size: 31.5px; letter-spacing: -.022em; }
.sub a.on { height: 85px; color: #1d4ed8; background: #eff6ff; border: 2px solid #bfdbfe; }
.sub svg { width: 36px; height: 36px; }
.welcome { height: 118px; border-top: 2px solid #e2e8f0; padding-left: 37px; line-height: 123px; font-size: 31.5px; letter-spacing: -.025em; color: #475569; }

.content { flex: 1; padding: 0 54px; display: flex; flex-direction: column; gap: 54px; }
.card { background: #fff; border: 2px solid #e2e8f0; border-radius: 18px; box-shadow: 0 2px 4px rgba(0,0,0,.05); }
.card .head { display: flex; align-items: center; padding: 36px 54px; border-bottom: 2px solid #e2e8f0; }
.card .body { padding: 54px; }
.card.available { margin-top: -40px; border: 4px solid #c5f6d2; background: linear-gradient(90deg, #f2fdf5, #effcf6); }
.card.available .head { height: 41px; padding: 0; border-color: #c5f6d2; }
.available .box { background: #fff; border-color: #c5f6d2; box-shadow: 0 2px 4px rgba(0,0,0,.05); }
.todo { width: 45px; height: 45px; margin-right: 18px; fill: none; stroke: #4a80f0; stroke-width: 2; stroke-linecap: round; stroke-linejoin: round; }
h2 { font-size: 40.5px; font-weight: 600; letter-spacing: -.024em; color: #0f172a; line-height: 50px; padding-top: 2px; }
h3 { font-size: 36px; font-weight: 600; letter-spacing: -.0133em; color: #0f172a; line-height: 56px; height: 54px; white-space: nowrap; }
.total { margin-left: auto; margin-right: 27px; padding-top: 2px; font-size: 31.5px; letter-spacing: -.0105em; color: #64748b; }
.btn { height: 81px; border: 0; border-radius: 14px; padding: 2px 27px 0; font: 500 31.5px Inter, sans-serif; letter-spacing: -.012em; color: #fff; display: flex; align-items: center; white-space: nowrap; }
.btn.green { background: #4ba153; }
.btn.blue { background: #3762e3; }
.btn.blue svg { width: 36px; height: 36px; margin: -2px 27px 0 0; fill: none; stroke: #fff; stroke-width: 2; stroke-linecap: round; }
.btn.outline { width: 140px; justify-content: center; border: 2px solid #bfdbfe; background: #f5f7fa; color: #3762e3; margin-left: 18px; }
.box { height: 202px; border: 2px solid #e2e8f0; border-radius: 18px; background: #f8fafc; padding: 36px; display: flex; justify-content: space-between; }
.line { display: flex; align-items: center; gap: 27px; }
.pill { height: 54px; line-height: 56px; border-radius: 27px; padding: 0 18px; font-size: 27px; font-weight: 500; letter-spacing: -.005em; white-space: nowrap; }
.ok { background: #dffae6; color: #2c6339; }
.pill.ok { letter-spacing: -.01em; }
.prog { background: #fdf3c7; color: #8a421d; }
.tags { display: flex; gap: 36px; margin-top: 18px; height: 54px; font-size: 27px; line-height: 57px; letter-spacing: -.0118em; color: #64748b; }
.tags span { padding: 0 18px; border-radius: 9px; background: #f1f5f9; }
.rows { display: flex; flex-direction: column; gap: 27px; }
.row { background: #f8fafc; border-radius: 18px; padding: 27px; display: flex; align-items: center; }
.dot { width: 27px; height: 27px; border-radius: 50%; background: #e7a13a; margin-right: 27px; }
.dot.g { background: #5fc267; }
.info { margin-right: auto; }
.row .line { gap: 18px; }
.chip { height: 45px; line-height: 47px; border-radius: 23px; padding: 0 18px; font-size: 27px; letter-spacing: -.003em; font-weight: 500; }
.med { background: #fef9c3; color: #955c1b; }
.high { background: #fdebd6; color: #b3431c; }
.tech { background: #dde9fd; color: #2546c6; }
.meta { display: flex; gap: 36px; margin-top: 9px; font-size: 27px; line-height: 38px; margin-bottom: 0; letter-spacing: -.0118em; color: #64748b; }
.meta span { height: 36px; }
.who { padding-top: 2px; font-size: 31.5px; letter-spacing: -.0225em; color: #64748b; white-space: nowrap; }
.row .who { margin-left: 18px; }
.act, .tools svg { width: 36px; height: 36px; fill: none; stroke: #64748b; stroke-width: 2; stroke-linecap: round; stroke-linejoin: round; }
.act { align-self: flex-start; margin-left: 18px; }
.act.last { margin-left: 27px; }
.boxes { display: flex; flex-direction: column; gap: 36px; }
.tools { height: 81px; display: flex; align-items: center; }
.tools svg { margin: 0 27px 0 45px; }
.tools svg.danger { stroke: #e0473f; }

/* desktop under the window */
.sticky { position: absolute; z-index: 1; left: 3179px; top: 2100px; width: 277px; height: 134px; overflow: hidden; background: linear-gradient(#000 8%, #6b6740 32%, #cfc676 55%, #f0e68d 80%); color: #111; font-size: 25px; font-weight: 700; white-space: nowrap; }
.sticky p { position: absolute; line-height: 30px; }
.l1 { right: -18px; top: 37px; }
.l2 { left: 24px; top: 124px; letter-spacing: -.03em; }
body::after { content: ""; position: absolute; left: 0; top: 2110px; width: 3179px; height: 124px; background: linear-gradient(90deg, #0b1510, #0d120e 20%, #20130a 30%, #2a160b 38%, #131d10 45%, #0d160c 70%, #1a1b12 88%, #3f2312); }
.window, .dock, .toast { z-index: 2; position: relative; }
.dock {
  width: 3308px; height: 110px; margin: 4px 0 0 75px; flex: none; padding: 14px 3px 0; border: 2px solid rgba(200,200,190,.35);
  border-radius: 32px; display: flex; box-shadow: 0 0 70px rgba(0,0,0,.3);
  background: linear-gradient(90deg, #525c58, #5e5c57 14%, #625a55 24%, #6f5f56 33%, #5f6659 42%, #5c625c 60%, #636760 78%, #7b6a5b 87%, #94886a 92%, #9b9569);
}
.cell { width: 91.75px; flex: none; height: 92px; position: relative; display: flex; justify-content: center; align-items: flex-start; }
.cell > svg { width: 72px; height: 72px; font-family: Inter, sans-serif; filter: drop-shadow(0 2px 2px rgba(0,0,0,.3)); }
.cell.run::after { content: ""; position: absolute; left: 42px; top: 82px; width: 8px; height: 8px; border-radius: 50%; background: #000; }
.cell.mini { padding-top: 50px; }
.cell.mini > svg { width: 26px; height: 26px; margin-left: 52px; }
.badge { position: absolute; left: 63px; top: -8px; min-width: 34px; height: 34px; line-height: 34px; padding: 0 5px; border-radius: 17px; background: #e6503f; color: #fff; font-size: 20px; font-weight: 400; letter-spacing: -.04em; text-align: center; transform: translateX(-2px); }
.cell:nth-child(4) .badge { left: 42px; }
.sep { width: 44px; flex: none; height: 82px; margin-top: -2px; background: linear-gradient(#333a32, #333a32) center / 2px 100% no-repeat; }
.sep.narrow { width: 40px; }

.toast { position: absolute; left: 2736px; top: 106px; width: 688px; height: 114px; border-radius: 30px; background: linear-gradient(110deg, #9f9ea2, #99989c 50%, #a3a4a5); border: 2px solid #aeadb1; box-shadow: 0 6px 24px rgba(0,0,0,.35); display: flex; align-items: center; padding: 0 24px; }
.toast svg { width: 64px; height: 64px; margin-right: 27px; }
.toast p { display: flex; flex-direction: column; font-size: 26px; line-height: 32px; color: #1b1b1d; letter-spacing: -.016em; }
.toast b { font-weight: 600; letter-spacing: -.003em; }
```
